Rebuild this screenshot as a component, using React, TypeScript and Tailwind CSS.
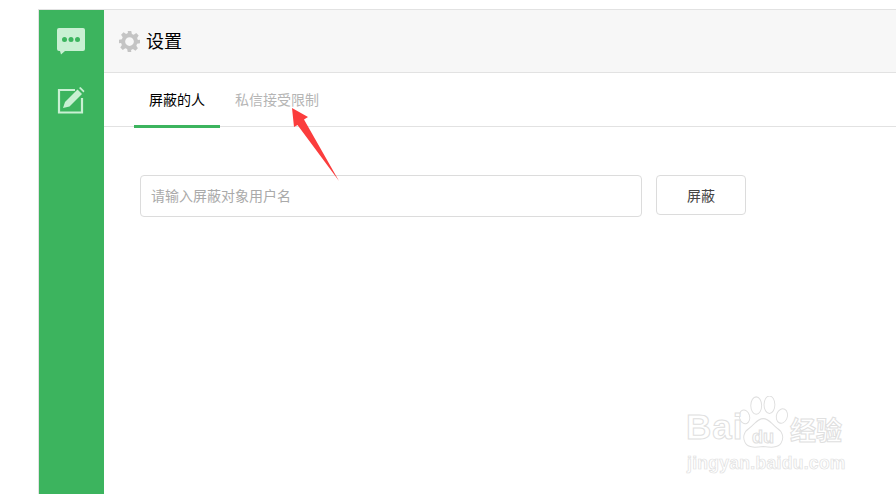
import React from "react";

const font = { fontFamily: '"Noto Sans CJK SC", "Liberation Sans", sans-serif' };

export default function App() {
  return (
    <div className="relative h-[494px] w-[896px] overflow-hidden bg-white pt-[9px] pl-[38px]" style={font}>
      <div className="flex h-[485px] border-t border-l border-[#e2e2e2]">
        {/* sidebar */}
        <div className="flex w-[65px] shrink-0 flex-col items-center bg-[#3cb45e] pt-[18px] pr-[2px]">
          <svg width="28" height="27" viewBox="0 0 28 27">
            <path d="M2 0h24a2 2 0 0 1 2 2v19a2 2 0 0 1-2 2H8l-4 3.500-1-3.500H2a2 2 0 0 1-2-2V2a2 2 0 0 1 2-2z" fill="#c9f0d3" />
            <circle cx="7.500" cy="11.500" r="2.500" fill="#3cb45e" />
            <circle cx="14" cy="11.500" r="2.500" fill="#3cb45e" />
            <circle cx="20.500" cy="11.500" r="2.500" fill="#3cb45e" />
          </svg>
          <svg className="mt-[32px]" width="28" height="28" viewBox="0 0 28 28">
            <path d="M18 3H2v22.500h23V11" fill="none" stroke="#c9f0d3" strokeWidth="2.200" />
            <path d="M6 21l2-6L20.500 2.500l4.500 4.500L12.500 19.500z" fill="#c9f0d3" />
            <path d="M22 1l1.500-1L27.500 4l-1 1.500z" fill="#c9f0d3" />
          </svg>
        </div>
        {/* main */}
        <div className="flex min-w-0 flex-1 flex-col">
          <div className="flex h-[63px] items-center border-b border-[#e2e2e2] bg-[#f7f7f7] pl-[15px]">
            <svg width="21" height="21" viewBox="0 0 24 24" fill="#c4c4c4">
              <path
                fillRule="evenodd"
                d="M10 0h4l.7 3.300 2.100.9 2.900-1.800 2.800 2.800-1.800 2.900.9 2.100L24 10v4l-3.300.7-.9 2.100 1.800 2.900-2.800 2.800-2.900-1.800-2.100.9L14 24h-4l-.7-3.300-2.100-.9-2.900 1.800-2.800-2.800 1.800-2.900-.9-2.100L0 14v-4l3.300-.7.9-2.100-1.800-2.900 2.800-2.800 2.900 1.800 2.100-.9zM12 7a5 5 0 1 0 0 10 5 5 0 0 0 0-10z"
              />
            </svg>
            <span className="mb-[2px] ml-[6px] text-[18px] leading-none text-black">设置</span>
          </div>
          <div className="flex h-[54px] border-b border-[#e2e2e2] pl-[30px]">
            <div className="flex h-[55px] w-[86px] items-center justify-center border-b-[3px] border-[#3cb45e] text-sm text-black">
              屏蔽的人
            </div>
            <div className="flex h-[52px] w-[114px] items-center justify-center text-sm text-[#b5b5b5]">
              私信接受限制
            </div>
          </div>
          <div className="flex items-start pt-[48px] pl-[36px]">
            <div className="flex h-[42px] w-[502px] items-center rounded border border-[#dcdcdc] pb-[2px] pl-[10px] text-sm text-[#aaaaaa]">
              请输入屏蔽对象用户名
            </div>
            <button className="ml-[14px] h-[40px] w-[90px] rounded border border-[#dcdcdc] text-sm text-[#444444]">
              屏蔽
            </button>
          </div>
        </div>
      </div>

      {/* annotation arrow */}
      <svg className="absolute top-[105px] left-[288px]" width="56" height="80" viewBox="0 0 56 80">
        <path d="M4 3L20 12 16 14.500 51 76 9.500 20 6 22z" fill="#fb3d3d" />
      </svg>

      {/* watermark */}
      <div className="absolute top-[396px] left-[686px] h-[78px] w-[170px]">
        <svg className="absolute top-0 left-[50px]" width="56" height="54" viewBox="0 0 72 62" preserveAspectRatio="none" fill="#ffffff" stroke="#dfdfdf" strokeWidth="1.200">
          <ellipse cx="11" cy="24" rx="6.500" ry="8" transform="rotate(-20 11 24)" />
          <ellipse cx="26" cy="11" rx="7" ry="10" />
          <ellipse cx="43" cy="10" rx="7" ry="10" />
          <ellipse cx="59" cy="23" rx="7" ry="8.500" transform="rotate(25 59 23)" />
          <path d="M35 26c-8 0-10 6-18 11-7 4-9 11-5 17 4 6 14 5 23 4 9 1 19 2 23-4 4-6 2-13-5-17-8-5-10-11-18-11z" />
        </svg>
        <span className="absolute top-[13px] left-0 text-[35px] leading-none font-bold tracking-[1px] text-white [-webkit-text-stroke:1px_#e0e0e0]" style={{ fontFamily: '"Liberation Sans", sans-serif' }}>
          Bai
        </span>
        <span className="absolute top-[32px] left-[66px] text-[18px] leading-none font-bold text-white [-webkit-text-stroke:1px_#e0e0e0]" style={{ fontFamily: '"Liberation Sans", sans-serif' }}>
          du
        </span>
        <span className="absolute top-[20px] left-[104px] text-[26px] leading-none font-bold text-white [-webkit-text-stroke:1px_#e0e0e0]">
          经验
        </span>
        <span className="absolute top-[59px] left-[1px] text-[17.500px] leading-none font-bold tracking-[0.300px] text-white [-webkit-text-stroke:0.700px_#e0e0e0]" style={{ fontFamily: '"Liberation Sans", sans-serif' }}>
          jingyan.baidu.com
        </span>
      </div>
    </div>
  );
}
